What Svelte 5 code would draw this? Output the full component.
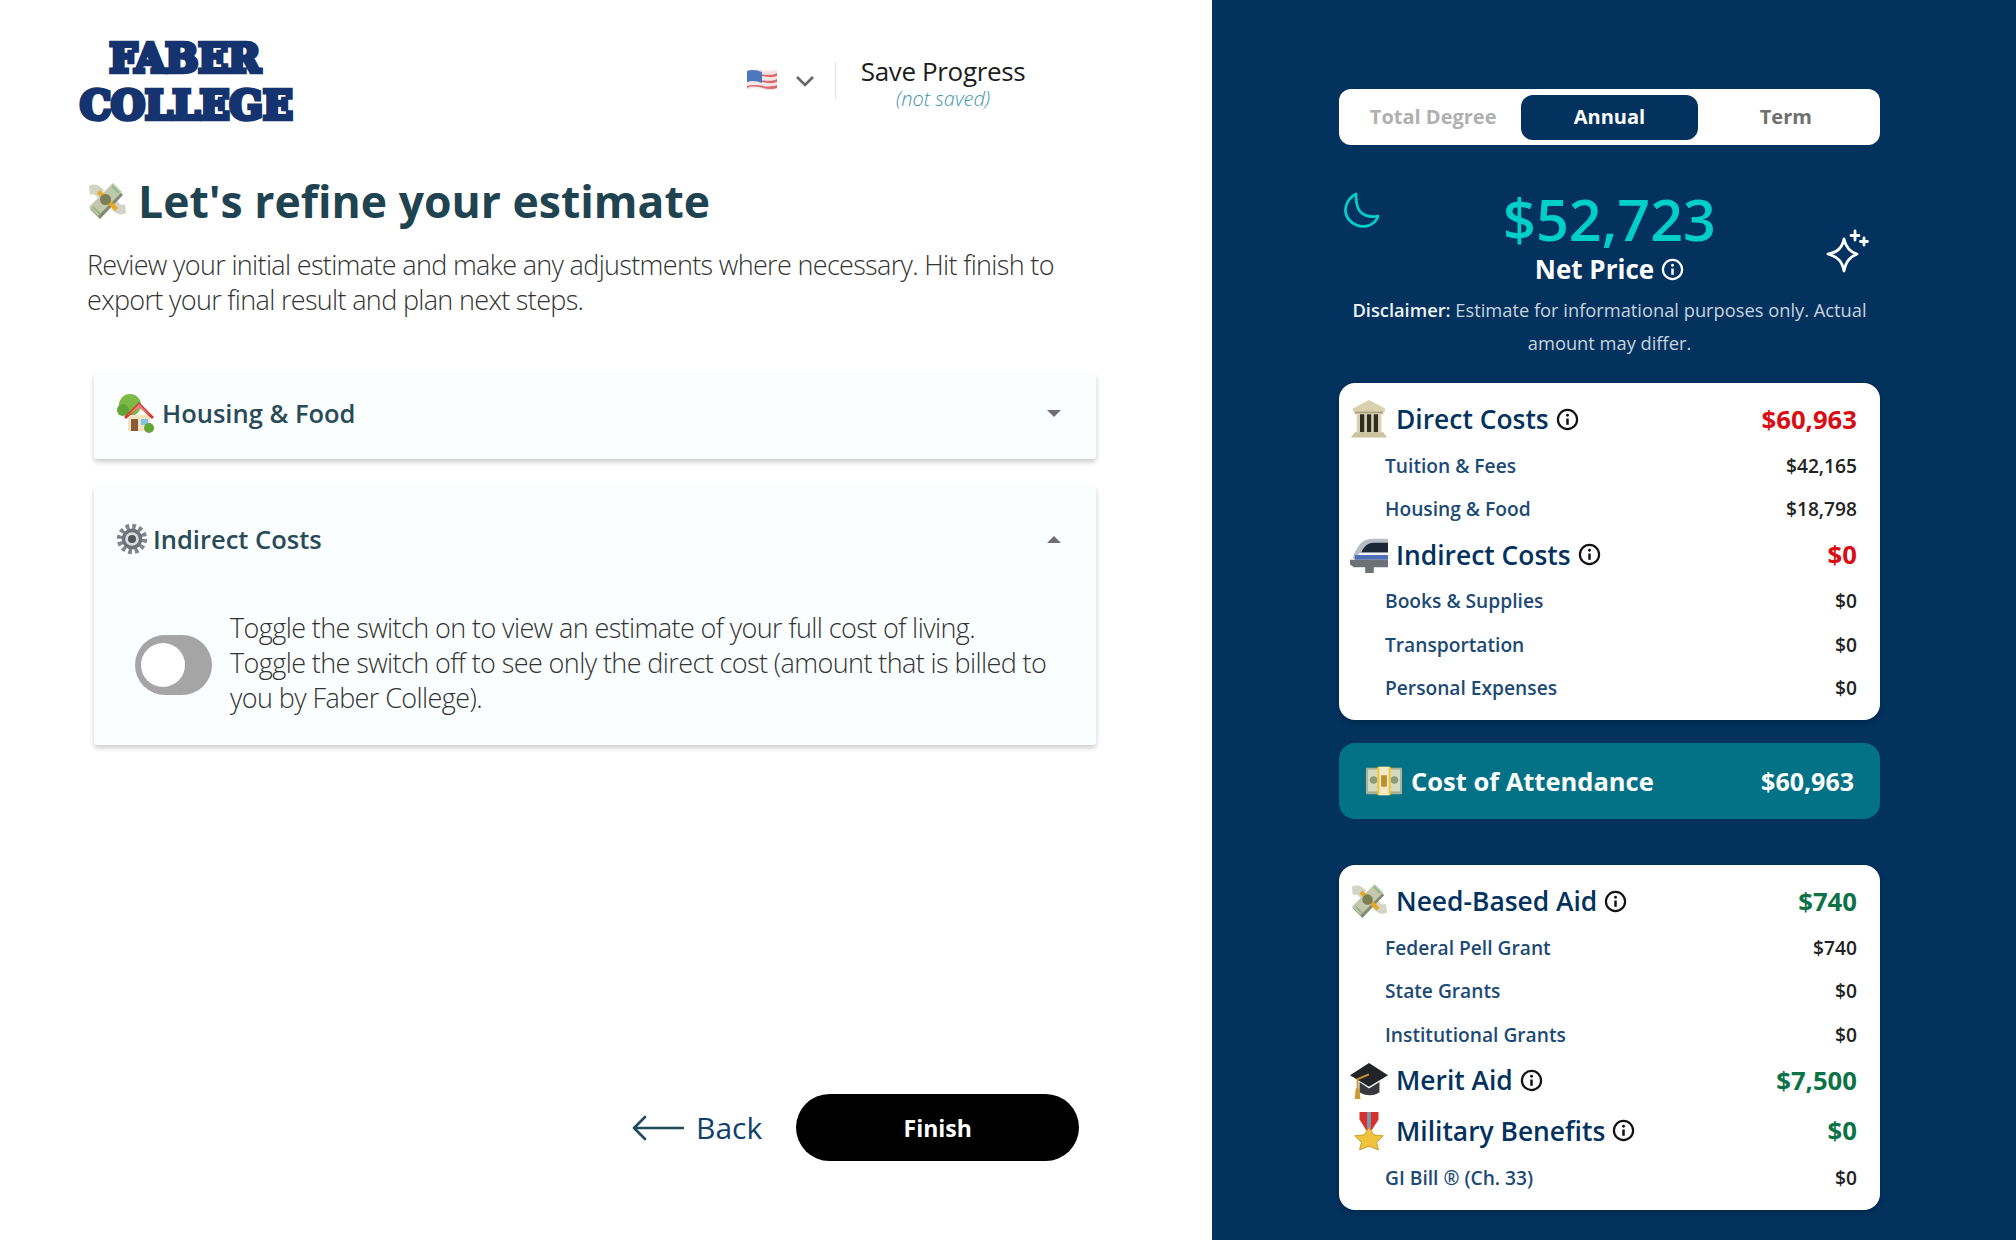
<script>
  const costs = [
    { title: 'Direct Costs', icon: 'bank', total: '$60,963', rows: [['Tuition & Fees', '$42,165'], ['Housing & Food', '$18,798']] },
    { title: 'Indirect Costs', icon: 'train', total: '$0', rows: [['Books & Supplies', '$0'], ['Transportation', '$0'], ['Personal Expenses', '$0']] }
  ];
  const aid = [
    { title: 'Need-Based Aid', icon: 'money', total: '$740', rows: [['Federal Pell Grant', '$740'], ['State Grants', '$0'], ['Institutional Grants', '$0']] },
    { title: 'Merit Aid', icon: 'cap', total: '$7,500', rows: [] },
    { title: 'Military Benefits', icon: 'medal', total: '$0', rows: [['GI Bill ® (Ch. 33)', '$0']], extra: true }
  ];
</script>

{#snippet info(size)}
  <svg class="info" width={size} height={size} viewBox="0 0 24 24" fill="none" stroke="currentColor" stroke-width="2.3">
    <circle cx="12" cy="12" r="10" />
    <path d="M12 11v6.500" stroke-width="2.6" />
    <circle cx="12" cy="7.500" r="1.500" fill="currentColor" stroke="none" />
  </svg>
{/snippet}

{#snippet emoji(name, size)}
  <svg class="emoji" width={size} height={size} viewBox="0 0 40 40">
    {#if name === 'money'}
      <path d="M2 5c6-3 10-1 15 4l-5 9C9 14 6 12 3 14z" fill="#d3d4c6" />
      <path d="M39 32c-6 3-10 1-15-4l5-9c3 4 6 6 9 4z" fill="#d3d4c6" />
      <path d="M3 28 27 4l9 10-23 24z" fill="#85896f" />
      <path d="M2 26 26 2l9 9-24 24z" fill="#c2c8ae" />
      <path d="M10 12l18 18 3-3L13 9z" fill="#e5a921" />
      <circle cx="18.500" cy="18.500" r="5.500" fill="#7c7f55" />
      <path d="M25 5l7 7M6 26l7 7" stroke="#8fb98a" stroke-width="2" />
    {:else if name === 'house'}
      <circle cx="14" cy="12" r="11" fill="#7dba45" />
      <circle cx="7" cy="17" r="6" fill="#62a436" />
      <path d="M12 22h22v16H12z" fill="#f2e3c2" />
      <path d="M8 24 23 9l15 15-2 2-13-12-13 12z" fill="#cf3a31" />
      <path d="M11 23 23 11l12 12-12-8z" fill="#e9807a" />
      <rect x="15" y="26" width="7" height="12" fill="#8a5a3a" />
      <rect x="25" y="26" width="7" height="6" fill="#7fc4e8" />
      <circle cx="33" cy="35" r="5" fill="#62a436" />
    {:else if name === 'gear'}
      <circle cx="20" cy="20" r="15.500" fill="none" stroke="#81868c" stroke-width="7" stroke-dasharray="4.500 3.600" />
      <circle cx="20" cy="20" r="13" fill="#6e747b" />
      <circle cx="20" cy="20" r="8.500" fill="#d9dbdc" />
      <circle cx="20" cy="20" r="5" fill="#4f555c" />
    {:else if name === 'bank'}
      <path d="M20 0 37 9v3H3V9z" fill="#d8d0ae" />
      <path d="M5 12h30v2.500H5z" fill="#a89e78" />
      <path d="M7 14h26v20H7z" fill="#d9d2b2" />
      <path d="M10.500 15h4.500v19h-4.500zM17.800 15h4.500v19h-4.500zM25 15h4.500v19H25z" fill="#2e2b24" />
      <path d="M5 34h30l4 5.500H1z" fill="#cbc29e" />
    {:else if name === 'train'}
      <path d="M40 3H24C12 3 6 12 3 24h37z" fill="#b7bcc2" />
      <path d="M40 7H25c-7 0-11 5-13 10h28z" fill="#1b2737" />
      <path d="M9 18h31v2H9z" fill="#f4f6f8" />
      <path d="M5 20h35v5H5z" fill="#4f6fb6" />
      <path d="M0 25h40v8H25v6h-9v-6H4l-4-3z" fill="#6c7177" />
    {:else if name === 'note'}
      <rect x="1" y="6" width="38" height="28" rx="1" fill="#a8b096" />
      <rect x="3" y="8" width="34" height="23" fill="#d4dabf" />
      <circle cx="9" cy="19" r="4" fill="#8d9a7c" />
      <circle cx="31" cy="19" r="4" fill="#8d9a7c" />
      <rect x="13" y="5" width="14" height="30" fill="#f4c430" />
      <rect x="15" y="5" width="10" height="30" fill="#eee8c6" />
      <path d="M17 14h6v12h-6z" fill="#b6912c" />
    {:else if name === 'cap'}
      <path d="M20 2 40 15 20 27 0 15z" fill="#232427" />
      <path d="M10 22v11c6 4 16 4 21 0V22L20 29z" fill="#38393c" />
      <path d="M20 14 8 19v12" fill="none" stroke="#c9952c" stroke-width="2" />
      <path d="M6 29h4l1 11H5z" fill="#d19a2e" />
    {:else if name === 'medal'}
      <path d="M10 0h20v8l-7 11h-6L10 8z" fill="#d4322c" />
      <path d="M18 0h4v18h-4z" fill="#7d97b8" />
      <path d="M20 16l5 8 10 1-7 7 2 8-10-4-10 4 2-8-7-7 10-1z" fill="#f0c33a" stroke="#b88d1e" stroke-width=".8" />
    {/if}
  </svg>
{/snippet}

{#snippet group(g, tone)}
  <div class="head" class:extra={g.extra}>
    <span class="head-ic">{@render emoji(g.icon, 38)}</span>
    <span class="head-title">{g.title}</span>
    {@render info(23)}
    <span class="head-total {tone}">{g.total}</span>
  </div>
  {#each g.rows as r}
    <div class="sub"><span>{r[0]}</span><b>{r[1]}</b></div>
  {/each}
{/snippet}

<div class="page">
  <main class="left">
    <header class="top">
      <div class="logo">
        <div>FABER</div>
        <div>COLLEGE</div>
      </div>
      <div class="tools">
        <svg class="flag" width="32" height="28" viewBox="0 0 32 28">
          <path d="M1 5c10-5 20 3 30-2v20c-10 4-20-4-30 1z" fill="#f3e6e4" />
          <path d="M1 8c10-3 20 4 30-1v3c-10 4-20-4-30 0zm0 6c10-3 20 4 30-1v3c-10 4-20-4-30 0zm0 6c10-3 20 3 30-1v3c-10 4-20-5-30 0z" fill="#dc6a70" />
          <path d="M1 5c5-2 10-1 15 1v11c-5-2-10-3-15-1z" fill="#4c79bd" />
        </svg>
        <svg class="chev" width="20" height="12" viewBox="0 0 20 12" fill="none" stroke="#666" stroke-width="2.6"><path d="M2 2l8 8 8-8" /></svg>
        <span class="divider"></span>
        <div class="save">
          <div class="save-t">Save Progress</div>
          <div class="save-s">(not saved)</div>
        </div>
      </div>
    </header>

    <h1>{@render emoji('money', 40)}<span>Let's refine your estimate</span></h1>
    <p class="lead">Review your initial estimate and make any adjustments where necessary. Hit finish to export your final result and plan next steps.</p>

    <section class="acc acc-closed">
      <div class="acc-head">
        <div class="acc-title">{@render emoji('house', 40)}<span>Housing &amp; Food</span></div>
        <span class="caret down"></span>
      </div>
    </section>

    <section class="acc acc-open">
      <div class="acc-head">
        <div class="acc-title tight">{@render emoji('gear', 32)}<span>Indirect Costs</span></div>
        <span class="caret up"></span>
      </div>
      <div class="acc-body">
        <span class="toggle"><span class="knob"></span></span>
        <p>Toggle the switch on to view an estimate of your full cost of living. Toggle the switch off to see only the direct cost (amount that is billed to you by Faber College).</p>
      </div>
    </section>

    <div class="nav">
      <button class="back">
        <svg width="52" height="26" viewBox="0 0 52 26" fill="none" stroke="#1f4a5a" stroke-width="2.6" stroke-linecap="round" stroke-linejoin="round"><path d="M51 13H2M13 2 2 13l11 11" /></svg>
        <span>Back</span>
      </button>
      <button class="finish">Finish</button>
    </div>
  </main>

  <aside class="right">
    <div class="tabs">
      <span class="tab muted">Total Degree</span>
      <span class="tab active">Annual</span>
      <span class="tab term">Term</span>
    </div>

    <div class="summary">
      <svg class="moon" width="38" height="38" viewBox="0 0 38 38" fill="none" stroke="#00cfc8" stroke-width="2.800" stroke-linejoin="round">
        <path d="M13 2C5 6 1 15 3 22c3 10 15 15 24 11 4-2 7-5 8-9-9 2-17-1-20-8-2-5-2-10-2-14z" />
      </svg>
      <div class="price">$52,723</div>
      <div class="net">Net Price {@render info(23)}</div>
      <svg class="spark" width="44" height="46" viewBox="0 0 44 46" fill="none" stroke="#fff" stroke-width="2.800" stroke-linejoin="round" stroke-linecap="round">
        <path d="M18 10c2 9 6 13 13 15-7 3-11 7-13 17-2-10-6-14-16-17 10-2 14-6 16-15z" />
        <path d="M29 2v9M25 6.500h8M38 9v7M34.500 12.500h7" />
      </svg>
      <p class="disc"><b>Disclaimer:</b> Estimate for informational purposes only. Actual amount may differ.</p>
    </div>

    <div class="card c1">
      {#each costs as g}{@render group(g, 'red')}{/each}
    </div>

    <div class="band">
      {@render emoji('note', 38)}
      <span class="band-t">Cost of Attendance</span>
      <span class="band-v">$60,963</span>
    </div>

    <div class="card c2">
      {#each aid as g}{@render group(g, 'green')}{/each}
    </div>
  </aside>
</div>

<style>
  :global(body) { margin: 0; background: #fff; }
  .page { display: flex; width: 2016px; height: 1240px; overflow: hidden; font-family: "Open Sans", sans-serif; }
  .left { width: 1212px; flex: none; box-sizing: border-box; padding: 38px 0 0 87px; display: flex; flex-direction: column; }
  .top { display: flex; align-items: flex-start; height: 85px; }
  .logo { width: 210px; margin-left: -7px; margin-top: -3px; font-family: "DejaVu Serif", serif; font-weight: 700; font-size: 39px; letter-spacing: 0; color: #15336f; text-align: center; -webkit-text-stroke: 4.5px #15336f; }
  .logo div { height: 47px; line-height: 47px; white-space: nowrap; }
  .tools { display: flex; align-items: center; margin-left: 456px; height: 62px; margin-top: 12px; }
  .flag { display: block; margin-top: -2px; }
  .chev { margin-left: 17px; }
  .divider { width: 1px; height: 38px; background: #e2e4e6; margin-left: 20px; }
  .save { margin-left: 23px; text-align: center; width: 168px; flex: none; margin-top: 3px; }
  .save-t { font-size: 26px; line-height: 32px; color: #1c1c1c; white-space: nowrap; letter-spacing: -.35px; }
  .save-s { font-size: 20px; line-height: 24px; font-style: italic; font-weight: 300; color: #3f97ad; }
  h1 { margin: 48px 0 0; display: flex; align-items: center; gap: 11px; font-size: 44.500px; line-height: 60px; font-weight: 700; color: #1f4350; }
  .lead { margin: 16px 0 0; width: 980px; font-size: 27px; line-height: 35px; font-weight: 300; color: #333; letter-spacing: -.67px; }
  .acc { margin-left: 7px; width: 1002px; background: #fbfeff; box-shadow: 0 3px 5px rgba(0,0,0,.2); border-radius: 3px; }
  .acc-closed { margin-top: 56px; height: 86px; }
  .acc-open { margin-top: 27px; height: 259px; }
  .acc-head { display: flex; align-items: center; justify-content: space-between; padding: 0 34px 0 22px; height: 86px; box-sizing: border-box; }
  .acc-closed .acc-head { padding-bottom: 6px; }
  .acc-open .acc-head { height: 106px; }
  .acc-title { display: flex; align-items: center; gap: 6px; font-size: 25.500px; font-weight: 600; color: #2a4a58; }
  .acc-title.tight { gap: 5px; }
  .caret { width: 0; height: 0; border-left: 7px solid transparent; border-right: 7px solid transparent; margin-right: 1px; }
  .down { border-top: 7px solid #6f6f6f; }
  .up { border-bottom: 7px solid #6f6f6f; }
  .acc-body { display: flex; align-items: center; padding: 0 0 0 41px; margin-top: 18px; }
  .toggle { width: 77px; height: 60px; flex: none; border-radius: 30px; background: #a5a5a5; box-sizing: border-box; padding: 8px 6px; display: block; margin-top: 4px; }
  .knob { display: block; width: 44px; height: 44px; border-radius: 50%; background: #fff; }
  .acc-body p { margin: 0 0 0 18px; width: 821px; font-size: 27px; line-height: 35px; font-weight: 300; color: #333; letter-spacing: -.6px; }
  .nav { display: flex; align-items: center; margin-top: auto; margin-bottom: 79px; margin-left: 545px; }
  button { font-family: inherit; border: 0; cursor: pointer; }
  .back { display: flex; align-items: center; gap: 12px; background: none; padding: 0; font-size: 30px; font-weight: 400; color: #0f3f6b; }
  .finish { margin-left: 34px; width: 283px; height: 67px; border-radius: 34px; background: #000; color: #fff; font-size: 23px; font-weight: 700; }
  .right { flex: 1; background: #03325e; box-sizing: border-box; padding: 89px 136px 0 127px; }
  .tabs { display: flex; align-items: center; height: 56px; background: #fff; border-radius: 12px; padding: 0 6px; box-sizing: border-box; font-size: 20px; font-weight: 700; }
  .tab { flex: 1; text-align: center; height: 45px; line-height: 43px; border-radius: 12px; }
  .muted { color: #b0b0b0; }
  .term { color: #6f6f6f; }
  .active { background: #03325e; color: #fff; }
  .summary { position: relative; text-align: center; color: #fff; height: 238px; }
  .moon { position: absolute; left: 4px; top: 47px; }
  .spark { position: absolute; right: 10px; top: 84px; }
  .price { padding-top: 40px; font-size: 57.500px; line-height: 68px; font-weight: 600; color: #00cfc8; }
  .net { display: flex; justify-content: center; align-items: center; gap: 7px; font-size: 26px; line-height: 32px; font-weight: 700; }
  .disc { margin: 8px -6px 0; font-size: 18.300px; line-height: 33px; color: #c8d3de; }
  .disc b { font-weight: 600; color: #eef2f6; }
  .card { background: #fff; border-radius: 16px; padding: 13px 23px 11.500px 11px; box-shadow: 0 2px 6px rgba(0,0,0,.25); }
  .head { display: flex; align-items: center; height: 46px; margin-bottom: 1.500px; color: #03325e; }
  .head:not(:first-child) { margin-top: 1.500px; }
  .head.extra { margin-top: 4.500px; }
  .head-ic { width: 38px; height: 38px; margin-right: 8px; display: block; }
  .head-title { font-size: 26.400px; font-weight: 600; margin-right: 7px; }
  .head .info { color: #111; }
  .head-total { margin-left: auto; font-size: 25.700px; font-weight: 700; }
  .red { color: #d90d14; }
  .green { color: #0d7347; }
  .sub { display: flex; justify-content: space-between; align-items: center; height: 43.300px; padding-left: 35px; font-size: 19.200px; font-weight: 600; color: #1c4a75; }
  .sub b { font-weight: 600; color: #222; }
  .band { display: flex; align-items: center; height: 76px; margin: 23px 0 46px; padding: 0 26px; background: #047286; border-radius: 16px; color: #fff; font-size: 25.500px; font-weight: 700; }
  .band-t { margin-left: 8px; }
  .band-v { margin-left: auto; font-size: 25px; }
  .emoji, .info { display: block; flex: none; }
</style>
